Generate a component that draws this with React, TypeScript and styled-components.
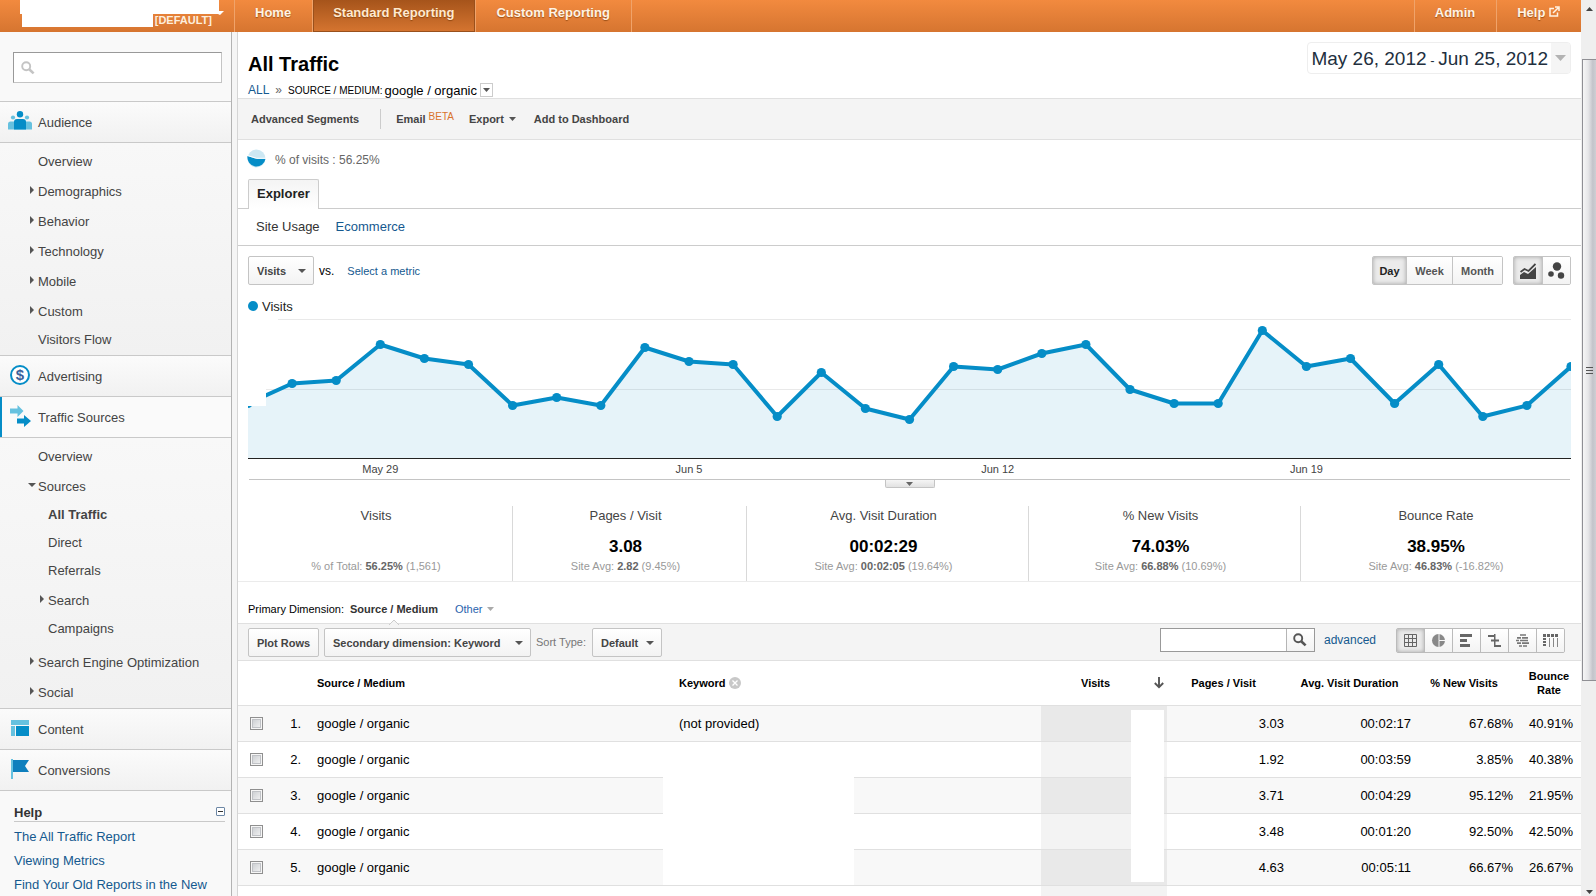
import React from "react";
import styled, { createGlobalStyle, css } from "styled-components";

const GlobalStyle = createGlobalStyle`
  *, *::before, *::after { box-sizing: border-box; }
  body { margin: 0; background: #f5f5f5; }
  body, button, input, select, table {
    font-family: "Liberation Sans", Arial, sans-serif;
    font-size: 13px;
  }
  a { color: #15598f; text-decoration: none; }
  h1, h2, h3, p, ul { margin: 0; padding: 0; }
  ul { list-style: none; }
  button { cursor: pointer; white-space: nowrap; }
`;

const line = "#e0e0e0";
const blue = "#058dc7";
const lightBlue = "#66c1df";

/* ---------- frame ---------- */

const Frame = styled.div`
  display: flex;
  height: 100vh;
  overflow: hidden;
`;

const Page = styled.div`
  flex: 1;
  min-width: 0;
  display: flex;
  flex-direction: column;
`;

const Columns = styled.div`
  flex: 1;
  min-height: 0;
  display: flex;
  gap: 5px;
`;

const ScrollTrack = styled.div`
  width: 15px;
  display: flex;
  flex-direction: column;
  background: #efefef;
  padding-left: 1px;
`;

const ScrollEnd = styled.div<{ $grow: number; $bottom?: boolean }>`
  flex: ${(p) => p.$grow} 1 0;
  display: flex;
  justify-content: center;
  align-items: ${(p) => (p.$bottom ? "flex-end" : "flex-start")};
  padding: ${(p) => (p.$bottom ? "0 0 0 1px" : "6px 0 0 1px")};
`;

const ScrollThumb = styled.div`
  flex: 620 1 0;
  display: flex;
  align-items: center;
  justify-content: center;
  border: 1px solid #8f8f94;
  border-right: 0;
  background: linear-gradient(90deg, #f6f6f6 0%, #e6e6e8 40%, #c4c4ca 75%, #cfcfd4 100%);
`;

/* ---------- top bar ---------- */

const TopBar = styled.header`
  flex: none;
  display: flex;
  height: 32px;
  background: linear-gradient(#f28a3f, #d67530);
`;

const Account = styled.div`
  width: 234px;
  position: relative;
  display: flex;
  justify-content: flex-end;
  padding: 13px 22px 0 0;
  color: #fdeedd;
  font-size: 11px;
  font-weight: bold;
  line-height: 14px;
`;

const AccountMask = styled.svg`
  position: absolute;
  left: 20px;
  top: 0;
`;

const NavTab = styled.a<{ $active?: boolean }>`
  height: 32px;
  padding: 5px 21px 0 20px;
  border-left: 1px solid #f0a36a;
  color: #fff3e4;
  font-weight: bold;
  line-height: 16px;
  text-shadow: 0 1px 1px rgba(110, 50, 0, 0.6);
  ${(p) =>
    p.$active &&
    css`
      color: #ffe9cf;
      background: linear-gradient(#a6541b, #d67530);
      box-shadow: inset 1px -1px 0 #99501c, inset -1px 0 0 #99501c;
    `}
`;

const NavSpace = styled.div`
  flex: 1;
  border-left: 1px solid #f0a36a;
`;

/* ---------- sidebar ---------- */

const Sidebar = styled.aside`
  flex: none;
  width: 232px;
  overflow: hidden;
  border-right: 1px solid #b3b3b3;
  background: #f9f9f9;
`;

const SideSearch = styled.label`
  display: flex;
  align-items: center;
  height: 31px;
  margin: 20px 9px 18px 13px;
  padding-left: 7px;
  border: 1px solid #c4c4c4;
  border-top-color: #999;
  border-left-color: #999;
  background: #fff;
`;

const BareInput = styled.input`
  flex: 1;
  min-width: 0;
  border: 0;
  outline: 0;
  background: transparent;
`;

const Section = styled.a<{ $current?: boolean }>`
  display: flex;
  align-items: center;
  height: 41px;
  padding-left: 8px;
  border-top: 1px solid #c9c9c9;
  box-shadow: ${(p) => (p.$current ? `inset 2px 0 0 ${blue}` : "none")};
  background: ${(p) => (p.$current ? "#fafafa" : "linear-gradient(#fbfbfb, #f1f1f1)")};
  color: #444;
`;

const SectionIcon = styled.span`
  display: flex;
  width: 30px;
  padding-bottom: 3px;
`;

const Group = styled.ul`
  padding: 5px 0 1px;
  border-top: 1px solid #c9c9c9;
  background: linear-gradient(#f8f8f8, #f1f1f1);
`;

const SubGroup = styled.ul`
  padding-bottom: 4px;
`;

const SideLink = styled.a<{ $depth?: number; $tall?: boolean; $strong?: boolean }>`
  display: flex;
  align-items: center;
  gap: 2px;
  height: ${(p) => (p.$tall ? 30 : 28)}px;
  padding-left: ${(p) => (p.$depth ? 38 : 28)}px;
  padding-bottom: ${(p) => (p.$tall ? 0 : 2)}px;
  color: #444;
  font-weight: ${(p) => (p.$strong ? "bold" : "normal")};
`;

const Twisty = styled.svg`
  flex: none;
  width: 8px;
  height: 10px;
  margin-bottom: 3px;
`;

const HelpBox = styled.section`
  border-top: 1px solid #c9c9c9;
  padding: 13px 6px 0 14px;
`;

const HelpTitle = styled.div`
  display: flex;
  justify-content: space-between;
  height: 18px;
  border-bottom: 1px solid #c9c9c9;
  margin-bottom: 3px;
  h3 { font-size: 13px; line-height: 18px; color: #333; }
`;

const Collapse = styled.button`
  width: 9px;
  height: 9px;
  margin-top: 3px;
  padding: 0;
  border: 1px solid #6d87a5;
  border-radius: 1px;
  background: linear-gradient(#333, #333) center / 5px 1px no-repeat, #fff;
`;

const HelpLink = styled.a`
  display: block;
  line-height: 24px;
  white-space: nowrap;
`;

/* ---------- report ---------- */

const Report = styled.main`
  flex: 1;
  min-width: 0;
  overflow: hidden;
  border-left: 1px solid #d5d5d5;
  background: #fff;
`;

const TitleBar = styled.div`
  display: flex;
  justify-content: space-between;
  align-items: flex-start;
  height: 66px;
  padding: 0 10px;
`;

const Title = styled.h1`
  margin-top: 20px;
  font-size: 20px;
  line-height: 24px;
  color: #000;
`;

const Crumbs = styled.div`
  display: flex;
  align-items: center;
  gap: 6px;
  height: 16px;
  margin-top: 6px;
  font-size: 12px;
  small { font-size: 10px; margin-right: -4px; }
  em { font-style: normal; font-size: 12px; color: #666; }
  strong { font-weight: normal; font-size: 13px; margin-right: -3px; }
`;

const CrumbMenu = styled.button`
  display: flex;
  align-items: center;
  justify-content: center;
  width: 13px;
  height: 14px;
  padding: 0;
  border: 1px solid #ccc;
  background: #fff;
`;

const DateRange = styled.button`
  display: flex;
  align-items: stretch;
  height: 32px;
  margin-top: 10px;
  padding: 0;
  border: 1px solid #eee;
  border-radius: 4px;
  overflow: hidden;
  background: #fff;
  color: #222f3e;
  font-size: 19px;
  line-height: 31px;
  span { padding: 0 3px; }
  small { font-size: 13px; }
  i { display: flex; align-items: center; width: 19px; padding-left: 4px; background: #f5f5f5; }
`;

const ActionBar = styled.div`
  display: flex;
  align-items: center;
  height: 42px;
  padding-left: 13px;
  border: solid ${line};
  border-width: 1px 0;
  background: #f4f4f4;
`;

const Action = styled.button<{ $gap?: number }>`
  display: flex;
  align-items: center;
  gap: 5px;
  margin-right: ${(p) => p.$gap ?? 18}px;
  padding: 0;
  border: 0;
  background: none;
  color: #444;
  font-size: 11px;
  font-weight: bold;
  sup { margin: -5px 0 0 -2px; font-size: 10px; font-weight: normal; line-height: 10px; color: #d9732c; }
`;

const Divider = styled.span`
  width: 1px;
  height: 20px;
  margin-right: 15px;
  background: #ccc;
`;

const ShareRow = styled.div`
  display: flex;
  align-items: center;
  gap: 9px;
  height: 39px;
  padding-left: 9px;
  font-size: 12px;
  color: #666;
  svg { margin-bottom: 3px; }
`;

const Tabs = styled.div`
  height: 30px;
  padding-left: 10px;
  border-bottom: 1px solid #ccc;
`;

const Tab = styled.button`
  display: block;
  height: 30px;
  padding: 0 8px 3px;
  border: 1px solid #ccc;
  border-bottom: 0;
  border-radius: 2px 2px 0 0;
  background: linear-gradient(#f4f4f4, #fff);
  color: #222;
  font-weight: bold;
`;

const SubTabs = styled.nav`
  display: flex;
  align-items: center;
  gap: 16px;
  height: 37px;
  padding: 0 0 2px 18px;
  border-bottom: 1px solid #ccc;
  color: #333;
`;

const MetricBar = styled.div`
  display: flex;
  align-items: center;
  height: 29px;
  margin: 10px 10px 0;
  font-size: 12px;
  a { font-size: 11px; margin: 0 auto 0 13px; }
`;

const raised = css`
  border: 1px solid #c4c4c4;
  border-radius: 2px;
  background: linear-gradient(#fff, #f3f3f3);
  color: #444;
  font-size: 11px;
  font-weight: bold;
`;

const PlainButton = styled.button`
  ${raised}
  width: 71px;
  height: 29px;
  margin-right: 5px;
  padding: 0;
`;

const Picker = styled.span<{ $width: number; $gap: number }>`
  display: grid;
  align-items: center;
  width: ${(p) => p.$width}px;
  margin-right: ${(p) => p.$gap}px;
  > * { grid-area: 1 / 1; }
  select {
    ${raised}
    appearance: none;
    width: 100%;
    height: 29px;
    padding: 0 18px 0 8px;
  }
  svg { justify-self: end; margin-right: 8px; pointer-events: none; }
`;

const Segments = styled.div<{ $height: number; $tone: string }>`
  display: flex;
  height: ${(p) => p.$height}px;
  margin-left: 10px;
  border: 1px solid ${(p) => p.$tone};
  border-radius: 2px;
  overflow: hidden;
  button + button { border-left: 1px solid ${(p) => p.$tone}; }
`;

const Segment = styled.button<{ $width: number; $on?: boolean }>`
  display: flex;
  align-items: center;
  justify-content: center;
  width: ${(p) => p.$width}px;
  padding: 0;
  border: 0;
  background: ${(p) => (p.$on ? "#ebebeb" : "linear-gradient(#fff, #f3f3f3)")};
  box-shadow: ${(p) => (p.$on ? "inset 0 0 4px rgba(0,0,0,.3)" : "none")};
  color: ${(p) => (p.$on ? "#222" : "#555")};
  font-size: 11px;
  font-weight: bold;
`;

const Legend = styled.div`
  display: flex;
  align-items: center;
  gap: 4px;
  height: 16px;
  margin: 13px 10px 0;
  color: #222;
  &::before { content: ""; width: 10px; height: 10px; border-radius: 5px; background: ${blue}; }
`;

const Chart = styled.svg`
  display: block;
  width: calc(100% - 20px);
  height: 165px;
  margin: 0 10px;
`;

const ChartFoot = styled.div`
  display: flex;
  justify-content: center;
  height: 27px;
  margin: 0 11px;
  border-top: 1px solid #c4c4c4;
`;

const Expander = styled.button`
  display: flex;
  align-items: center;
  justify-content: center;
  width: 50px;
  height: 8px;
  padding: 0;
  border: 1px solid #c4c4c4;
  border-top: 0;
  border-radius: 0 0 2px 2px;
  background: linear-gradient(#f5f5f5, #e2e2e2);
`;

const Scorecards = styled.div`
  display: grid;
  grid-template-columns: 265fr 234fr 282fr 272fr 270fr;
  height: 76px;
  padding: 0 10px;
  border-bottom: 1px solid #ebebeb;
`;

const Card = styled.div`
  display: grid;
  grid-template-rows: 19px 34px 14px;
  align-content: start;
  align-items: center;
  justify-items: center;
  padding-right: 8px;
  border-right: 1px solid #d9d9d9;
  &:last-child { border-right: 0; padding-right: 0; }
  h2 { font-size: 13px; font-weight: normal; color: #444; }
  b { font-size: 17px; padding-top: 9px; color: #000; }
  p { font-size: 11px; line-height: 14px; color: #999; white-space: nowrap; }
  p strong { color: #666; }
`;

const Dimensions = styled.div`
  display: flex;
  align-items: center;
  height: 41px;
  padding: 12px 0 0 10px;
  font-size: 11px;
  color: #000;
  a { display: flex; align-items: center; gap: 4px; color: #2a63ad; }
`;

const CurrentDimension = styled.strong`
  position: relative;
  margin: 0 17px 0 6px;
  color: #333;
  svg { position: absolute; left: calc(50% - 6px); top: 16px; }
`;

const TableBar = styled.div`
  display: flex;
  align-items: flex-start;
  height: 38px;
  padding: 4px 16px 0 10px;
  border: solid ${line};
  border-width: 1px 0;
  background: #f4f4f4;
`;

const SortLabel = styled.label`
  margin-right: 6px;
  font-size: 11px;
  line-height: 28px;
  color: #777;
`;

const TableSearch = styled.form`
  display: flex;
  width: 155px;
  height: 24px;
  margin: 0 9px 0 auto;
  border: 1px solid #999;
  background: #fff;
  button {
    display: flex;
    align-items: center;
    justify-content: center;
    width: 28px;
    padding: 0;
    border: 0;
    border-left: 1px solid #b5b5b5;
    background: linear-gradient(#fff, #f3f3f3);
  }
`;

const Advanced = styled.a`
  margin-right: 10px;
  font-size: 12px;
  line-height: 24px;
`;

const DataTable = styled.table`
  width: 100%;
  table-layout: fixed;
  border-collapse: separate;
  border-spacing: 0;
  color: #000;
  th, td { padding: 0; border-bottom: 1px solid ${line}; text-align: left; }
  th { height: 45px; font-size: 11px; line-height: 14px; }
  td { height: 36px; }
  tbody tr:nth-child(odd) td { background: #f8f8f8; }
  tbody tr:nth-child(odd) td:nth-child(5) { background: #e9e9e9; }
  tbody tr:nth-child(even) td:nth-child(5) { background: #f3f3f3; }
  input {
    display: block;
    appearance: none;
    width: 13px;
    height: 13px;
    margin: 0 0 0 12px;
    border: 1px solid #8f8f8f;
    background: linear-gradient(135deg, #c5c8cc, #f8f8f8);
    box-shadow: inset 0 0 0 1px #f6f6f6, inset 0 0 0 2px #c0c2c6;
  }
  td.count { padding-right: 16px; text-align: right; }
  td.figure { padding-right: 8px; text-align: right; }
  th.figure { padding-right: 12px; text-align: center; }
  th.figure:last-child { padding-right: 4px; }
`;

const Heading = styled.span<{ $spread?: boolean }>`
  display: flex;
  align-items: center;
  gap: 4px;
  ${(p) => p.$spread && "justify-content: space-between; padding: 0 3px 0 40px;"}
`;

const MaskHost = styled.div`
  position: relative;
  height: 35px;
  line-height: 35px;
`;

const Mask = styled.span<{ $tall: number; $wide: number; $top: number; $right?: boolean }>`
  position: absolute;
  z-index: 1;
  top: ${(p) => p.$top}px;
  ${(p) => (p.$right ? "right: 3px" : "left: -16px")};
  width: ${(p) => p.$wide}px;
  height: ${(p) => p.$tall}px;
  background: #fff;
`;

/* ---------- drawings ---------- */

const Caret = ({ w = 7, h = 4, fill = "#555" }) => (
  <svg width={w} height={h} viewBox="0 0 8 4" preserveAspectRatio="none" aria-hidden="true">
    <path d="M0 0h8L4 4z" fill={fill} />
  </svg>
);

const Lens = ({ size = 14, fill = "#555" }) => (
  <svg width={size} height={size} viewBox="0 0 14 14" fill="none" stroke={fill} aria-hidden="true">
    <circle cx="5.2" cy="5.2" r="4" strokeWidth="1.9" />
    <path d="M8.2 8.2L12.6 12.4" strokeWidth="2.6" />
  </svg>
);

const icons = {
  audience: (
    <svg width="24" height="19" viewBox="0 0 24 19">
      <g fill={lightBlue}>
        <circle cx="5" cy="6.5" r="2.1" />
        <circle cx="19" cy="6.5" r="2.1" />
        <path d="M0 18.500v-5.500q0-2.500 2.500-2.500h19q2.500 0 2.500 2.500v5.500z" />
      </g>
      <circle cx="12" cy="3.300" r="3.200" fill={blue} />
      <path d="M6 18.500v-7.500q0-3 3-3h6q3 0 3 3v7.500z" fill={blue} />
    </svg>
  ),
  advertising: (
    <svg width="24" height="20" viewBox="-2 0 24 20">
      <circle cx="10" cy="10" r="9" fill="#fff" stroke={blue} strokeWidth="2" />
      <text x="10" y="15.300" textAnchor="middle" fontSize="15" fontWeight="bold" fill="#3c5f9c">$</text>
    </svg>
  ),
  traffic: (
    <svg width="24" height="22" viewBox="-2 0 24 22">
      <path d="M0 3.500h7.500V0L13.500 6l-6 6V8.500H0z" fill={lightBlue} />
      <path d="M7 13.500h7V10l7 6-7 6v-3.500H7z" fill={blue} />
    </svg>
  ),
  content: (
    <svg width="24" height="16" viewBox="-3 0 24 16">
      <path d="M0 0h18v5H0zM0 6h4v10H0z" fill={lightBlue} />
      <path d="M5 6h13v10H5z" fill={blue} />
    </svg>
  ),
  conversions: (
    <svg width="24" height="20" viewBox="-3 0 24 20">
      <path d="M0 0h2v20H0z" fill={lightBlue} />
      <path d="M2 1h16l-4 6 4 6H2z" fill="#0e7fbd" />
    </svg>
  ),
};

const viewIcons: [string, React.ReactNode][] = [
  ["Table", <path d="M.5.500h12v12H.500zM4.500.500v12M8.500.500v12M.500 4.500h12M.500 8.500h12" fill="none" stroke="#666" />],
  ["Percentage", <><circle cx="6.500" cy="6.500" r="6.500" fill="#888" /><path d="M7 0v6.500H13M7 6.500V13" stroke="#f6f6f6" fill="none" /></>],
  ["Performance", <path d="M0 0h12v3H0zM0 5h7v3H0zM0 10h10v3H0z" fill="#666" />],
  ["Comparison", <path d="M0 1h7v2H0zM6 0h1.500v13H6zM6 5.500h5v2H6zM3 5.500h3v2H3zM6 11h7v2H6z" fill="#666" />],
  ["Term cloud", <path d="M4 1h6M1 3.800h4M6 3.800h6M0 6.500h3M4 6.500h8M1 9.200h4M6 9.200h7M3 12h3M7 12h4" stroke="#777" strokeWidth="1.700" />],
  ["Pivot", <><path d="M-1 1.500h15" stroke="#666" strokeWidth="3" strokeDasharray="3 1" /><path d="M.500 4v9" stroke="#666" strokeWidth="3" strokeDasharray="2 1" /><path d="M5.500 4v9M9.500 4v9M13.500 4v9" stroke="#888" /></>],
];

/* ---------- data ---------- */

const visits = [
  403, 383, 380, 344, 358, 364, 405, 397, 405, 347, 361, 364, 416, 372, 408, 419,
  366, 369, 353, 344, 389, 403, 403, 330, 366, 358, 403, 364, 416, 405, 366,
].map((y, i) => [i * 44.1, y - 313.5]);

const cards = [
  ["Visits", "", "% of Total:", "56.25%", "(1,561)"],
  ["Pages / Visit", "3.08", "Site Avg:", "2.82", "(9.45%)"],
  ["Avg. Visit Duration", "00:02:29", "Site Avg:", "00:02:05", "(19.64%)"],
  ["% New Visits", "74.03%", "Site Avg:", "66.88%", "(10.69%)"],
  ["Bounce Rate", "38.95%", "Site Avg:", "46.83%", "(-16.82%)"],
];

const rows = [
  ["3.03", "00:02:17", "67.68%", "40.91%"],
  ["1.92", "00:03:59", "3.85%", "40.38%"],
  ["3.71", "00:04:29", "95.12%", "21.95%"],
  ["3.48", "00:01:20", "92.50%", "42.50%"],
  ["4.63", "00:05:11", "66.67%", "26.67%"],
];

type ItemProps = { label: string; state?: "closed" | "open"; depth?: number; strong?: boolean };

const Item = ({ label, state, depth, strong }: ItemProps) => (
  <li>
    <SideLink href="#" $depth={depth} $tall={!!state} $strong={strong}>
      <Twisty viewBox="0 0 8 10" aria-hidden="true">
        {state === "closed" && <path d="M2 1v8l4-4z" fill="#555" />}
        {state === "open" && <path d="M0 3h8L4 7z" fill="#555" />}
      </Twisty>
      {label}
    </SideLink>
  </li>
);

const SectionLink = ({ label, icon, current }: { label: string; icon: keyof typeof icons; current?: boolean }) => (
  <Section href="#" $current={current}>
    <SectionIcon>{icons[icon]}</SectionIcon>
    {label}
  </Section>
);

const VisitsChart = () => {
  const path = visits.map(([x, y]) => `${x},${y}`).join(" ");
  return (
    <Chart viewBox="0 0 1323 165" preserveAspectRatio="none" role="img" aria-label="Visits per day">
      <path d="M0 5.500H1323M0 75.500H1323" stroke="#e9e9e9" />
      <polygon points={`0,144 ${path} 1323,144`} fill={blue} fillOpacity="0.1" />
      <polyline points={path} fill="none" stroke={blue} strokeWidth="4" strokeLinejoin="round" />
      {visits.map(([x, y]) => <circle key={x} cx={x} cy={y} r="4.600" fill={blue} />)}
      <path d="M0 0h30v10H0zM0 0h18v92H0z" fill="#fff" />
      <path d="M0 144.500H1323" stroke="#222" />
      {[["May 29", 3], ["Jun 5", 10], ["Jun 12", 17], ["Jun 19", 24]].map(([t, i]) => (
        <text key={t} x={Number(i) * 44.1} y="159" textAnchor="middle" fontSize="11" fill="#444">{t}</text>
      ))}
    </Chart>
  );
};

export default function App() {
  return (
    <>
      <GlobalStyle />
      <Frame>
        <Page>
          <TopBar>
            <Account>
              <AccountMask width="206" height="28" aria-hidden="true">
                <path d="M0 0h199v11h5l-4 4-2-1H133v13H2V14H0z" fill="#fff" />
              </AccountMask>
              [DEFAULT]
            </Account>
            <NavTab href="#">Home</NavTab>
            <NavTab href="#" $active>Standard Reporting</NavTab>
            <NavTab href="#">Custom Reporting</NavTab>
            <NavSpace />
            <NavTab href="#">Admin</NavTab>
            <NavTab href="#">
              Help{" "}
              <svg width="11" height="11" viewBox="0 0 11 11" fill="none" stroke="#fff3e4" strokeWidth="1.500" aria-hidden="true">
                <path d="M5 2.500H1v7.500h7.500V6.500M4 7l5-5M6 1h4v4" />
              </svg>
            </NavTab>
          </TopBar>
          <Columns>
            <Sidebar>
              <SideSearch aria-label="Find reports">
                <Lens fill="#c4c4c4" />
                <BareInput type="text" />
              </SideSearch>
              <SectionLink label="Audience" icon="audience" />
              <Group>
                <Item label="Overview" />
                {["Demographics", "Behavior", "Technology", "Mobile", "Custom"].map((l) => (
                  <Item key={l} label={l} state="closed" />
                ))}
                <Item label="Visitors Flow" />
              </Group>
              <SectionLink label="Advertising" icon="advertising" />
              <SectionLink label="Traffic Sources" icon="traffic" current />
              <Group>
                <Item label="Overview" />
                <Item label="Sources" state="open" />
                <li>
                  <SubGroup>
                    <Item label="All Traffic" depth={1} strong />
                    <Item label="Direct" depth={1} />
                    <Item label="Referrals" depth={1} />
                    <Item label="Search" depth={1} state="closed" />
                    <Item label="Campaigns" depth={1} />
                  </SubGroup>
                </li>
                <Item label="Search Engine Optimization" state="closed" />
                <Item label="Social" state="closed" />
              </Group>
              <SectionLink label="Content" icon="content" />
              <SectionLink label="Conversions" icon="conversions" />
              <HelpBox>
                <HelpTitle>
                  <h3>Help</h3>
                  <Collapse aria-label="Collapse help" />
                </HelpTitle>
                <HelpLink href="#">The All Traffic Report</HelpLink>
                <HelpLink href="#">Viewing Metrics</HelpLink>
                <HelpLink href="#">Find Your Old Reports in the New</HelpLink>
              </HelpBox>
            </Sidebar>

            <Report>
              <TitleBar>
                <div>
                  <Title>All Traffic</Title>
                  <Crumbs>
                    <a href="#">ALL</a>
                    <em>»</em>
                    <small>SOURCE / MEDIUM:</small>
                    <strong>google / organic</strong>
                    <CrumbMenu aria-label="Change source"><Caret /></CrumbMenu>
                  </Crumbs>
                </div>
                <DateRange>
                  <span>May 26, 2012<small> - </small>Jun 25, 2012</span>
                  <i><Caret w={11} h={6} fill="#b3b3b3" /></i>
                </DateRange>
              </TitleBar>
              <ActionBar>
                <Action $gap={21}>Advanced Segments</Action>
                <Divider />
                <Action $gap={15}>Email <sup>BETA</sup></Action>
                <Action>Export <Caret /></Action>
                <Action>Add to Dashboard</Action>
              </ActionBar>
              <ShareRow>
                <svg width="19" height="19" viewBox="0 0 19 19" aria-hidden="true">
                  <circle cx="9.500" cy="9.500" r="9" fill="#cde8f3" />
                  <path d="M.5 7L9.500 9.800H18.500A9 9 0 0 1 .5 7z" fill={blue} />
                  <path d="M.5 6.500L9.500 9.300H19" stroke="#fff" fill="none" />
                </svg>
                % of visits : 56.25%
              </ShareRow>
              <Tabs><Tab>Explorer</Tab></Tabs>
              <SubTabs>
                <span>Site Usage</span>
                <a href="#">Ecommerce</a>
              </SubTabs>
              <MetricBar>
                <Picker $width={66} $gap={5}>
                  <select aria-label="Metric"><option>Visits</option></select>
                  <Caret w={8} />
                </Picker>
                vs.
                <a href="#">Select a metric</a>
                <Segments $height={29} $tone="#c4c4c4">
                  <Segment $width={33} $on>Day</Segment>
                  <Segment $width={46}>Week</Segment>
                  <Segment $width={50}>Month</Segment>
                </Segments>
                <Segments $height={29} $tone="#c4c4c4">
                  <Segment $width={28} $on aria-label="Line chart">
                    <svg width="16" height="16" viewBox="0 0 16 16">
                      <path d="M0 16v-4l4-3 4 2 8-7v12z" fill="#444" />
                      <path d="M.5 9l4-3 4 2L15.500 1" fill="none" stroke="#444" strokeWidth="1.800" />
                    </svg>
                  </Segment>
                  <Segment $width={28} aria-label="Motion chart">
                    <svg width="17" height="17" viewBox="0 0 17 17" fill="#444">
                      <circle cx="9" cy="4.500" r="4.200" />
                      <circle cx="3" cy="12" r="2.800" />
                      <circle cx="13" cy="13.500" r="3.200" />
                    </svg>
                  </Segment>
                </Segments>
              </MetricBar>
              <Legend>Visits</Legend>
              <VisitsChart />
              <ChartFoot>
                <Expander aria-label="Show annotations"><Caret w={7} h={4} fill="#666" /></Expander>
              </ChartFoot>
              <Scorecards>
                {cards.map(([name, value, lead, avg, diff]) => (
                  <Card key={name}>
                    <h2>{name}</h2>
                    <b>{value}</b>
                    <p>{lead} <strong>{avg}</strong> {diff}</p>
                  </Card>
                ))}
              </Scorecards>
              <Dimensions>
                Primary Dimension:
                <CurrentDimension>
                  Source / Medium
                  <svg width="12" height="7" viewBox="0 0 12 7" aria-hidden="true">
                    <path d="M1 6l5-5 5 5v1H1z" fill="#f4f4f4" />
                    <path d="M1 6l5-5 5 5" fill="none" stroke="#ccc" />
                  </svg>
                </CurrentDimension>
                <a href="#">Other <Caret fill="#aaa" /></a>
              </Dimensions>
              <TableBar>
                <PlainButton>Plot Rows</PlainButton>
                <Picker $width={207} $gap={5}>
                  <select aria-label="Secondary dimension"><option>Secondary dimension: Keyword</option></select>
                  <Caret w={8} />
                </Picker>
                <SortLabel htmlFor="sort">Sort Type:</SortLabel>
                <Picker $width={70} $gap={0}>
                  <select id="sort"><option>Default</option></select>
                  <Caret w={8} />
                </Picker>
                <TableSearch onSubmit={(e) => e.preventDefault()}>
                  <BareInput type="text" aria-label="Search rows" />
                  <button aria-label="Search"><Lens /></button>
                </TableSearch>
                <Advanced href="#">advanced</Advanced>
                <Segments $height={25} $tone="#bbb">
                  {viewIcons.map(([name, art], i) => (
                    <Segment key={name} $width={i ? 28 : 27} $on={i === 0} aria-label={name}>
                      <svg width="15" height="13" viewBox="-1 0 15 13">{art}</svg>
                    </Segment>
                  ))}
                </Segments>
              </TableBar>
              <DataTable>
                <colgroup>
                  <col width="38" /><col width="41" /><col /><col />
                  <col width="126" /><col width="125" /><col width="127" /><col width="102" /><col width="60" />
                </colgroup>
                <thead>
                  <tr>
                    <th /><th />
                    <th>Source / Medium</th>
                    <th>
                      <Heading>
                        Keyword
                        <svg width="12" height="12" viewBox="0 0 12 12" aria-hidden="true">
                          <circle cx="6" cy="6" r="6" fill="#c8c8c8" />
                          <path d="M3.500 3.500l5 5M8.500 3.500l-5 5" stroke="#fff" strokeWidth="1.300" />
                        </svg>
                      </Heading>
                    </th>
                    <th>
                      <Heading $spread>
                        Visits
                        <svg width="10" height="12" viewBox="0 0 10 12" aria-hidden="true">
                          <path d="M5 0v10M.800 6L5 10.200 9.200 6" fill="none" stroke="#555" strokeWidth="1.900" />
                        </svg>
                      </Heading>
                    </th>
                    <th className="figure">Pages / Visit</th>
                    <th className="figure">Avg. Visit Duration</th>
                    <th className="figure">% New Visits</th>
                    <th className="figure">Bounce Rate</th>
                  </tr>
                </thead>
                <tbody>
                  {rows.map((figures, i) => (
                    <tr key={i}>
                      <td><input type="checkbox" aria-label={`Plot row ${i + 1}`} /></td>
                      <td className="count">{i + 1}.</td>
                      <td>google / organic</td>
                      <td>
                        <MaskHost>
                          {i === 0 && "(not provided)"}
                          {i === 2 && <Mask $top={-1} $tall={108} $wide={191} />}
                        </MaskHost>
                      </td>
                      <td>
                        <MaskHost>{i === 0 && <Mask $right $top={4} $tall={172} $wide={33} />}</MaskHost>
                      </td>
                      {figures.map((f, n) => <td key={n} className="figure">{f}</td>)}
                    </tr>
                  ))}
                  <tr>{Array.from({ length: 9 }, (_, n) => <td key={n} />)}</tr>
                </tbody>
              </DataTable>
            </Report>
          </Columns>
        </Page>
        <ScrollTrack>
          <ScrollEnd $grow={53}>
            <svg width="7" height="5" viewBox="0 0 7 5"><path d="M0 5h7L3.500 1z" fill="#444" /></svg>
          </ScrollEnd>
          <ScrollThumb>
            <svg width="7" height="9" viewBox="0 0 7 9"><path d="M0 1.500h7M0 4.500h7M0 7.500h7" stroke="#555" /></svg>
          </ScrollThumb>
          <ScrollEnd $grow={215} $bottom>
            <svg width="7" height="6" viewBox="0 0 7 6"><path d="M0 0h7L3.500 4z" fill="#444" /></svg>
          </ScrollEnd>
        </ScrollTrack>
      </Frame>
    </>
  );
}
